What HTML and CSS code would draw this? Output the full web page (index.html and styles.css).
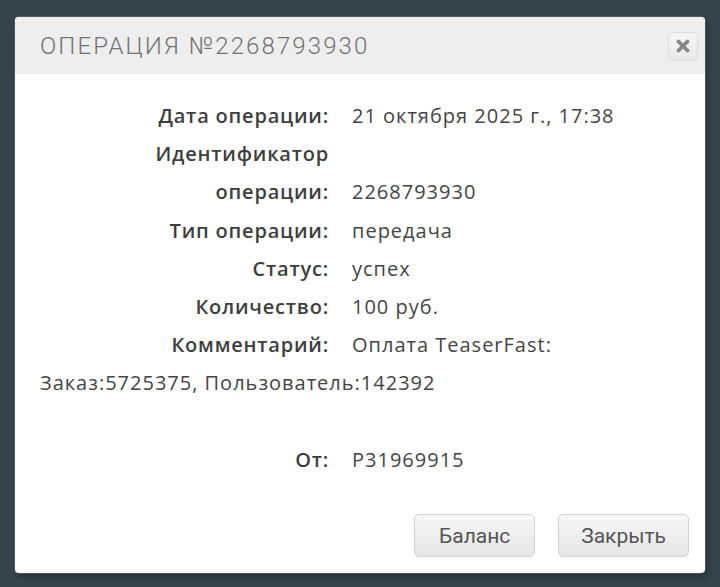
FILE: index.html
```html
<!DOCTYPE html>
<html lang="ru">
<head>
<meta charset="utf-8">
<title>Операция №2268793930</title>
<link rel="stylesheet" href="styles.css">
</head>
<body>
<div class="modal">
  <div class="modal-header">
    <h3 class="title">ОПЕРАЦИЯ №2268793930</h3>
    <button class="close" type="button" aria-label="Закрыть">
      <svg width="14" height="14" viewBox="0 0 14 14"><path d="M2.5 2.5 L11.5 11.5 M11.5 2.5 L2.5 11.5" stroke="#868686" stroke-width="3.8" stroke-linecap="round"/></svg>
    </button>
  </div>
  <div class="modal-body">
    <div class="row"><span class="label">Дата операции:</span><span class="value">21 октября 2025 г., 17:38</span></div>
    <div class="row"><span class="label">Идентификатор<br>операции:</span><span class="value">2268793930</span></div>
    <div class="row"><span class="label">Тип операции:</span><span class="value">передача</span></div>
    <div class="row"><span class="label">Статус:</span><span class="value">успех</span></div>
    <div class="row"><span class="label">Количество:</span><span class="value">100 руб.</span></div>
    <div class="row"><span class="label">Комментарий:</span><span class="value">Оплата TeaserFast:<br>Заказ:5725375, Пользователь:142392</span></div>
    <div class="row spacer"></div>
    <div class="row"><span class="label">От:</span><span class="value">P31969915</span></div>
  </div>
  <div class="modal-footer">
    <button class="btn" type="button">Баланс</button>
    <button class="btn" type="button">Закрыть</button>
  </div>
</div>
</body>
</html>
```
FILE: styles.css
```css
html, body {
  margin: 0;
  padding: 0;
  background: #37444c;
  height: 100%;
}
body {
  padding: 17px 15px 0;
  box-sizing: border-box;
}
.modal {
  width: 690px;
  background: #fff;
  border-radius: 4px;
  overflow: hidden;
  box-shadow: 0 0 0 1px rgba(255,255,255,0.15), 2px 3px 6px rgba(0,0,0,0.35);
}
.modal-header {
  height: 57px;
  background: #eeeeee;
  display: flex;
  align-items: center;
  justify-content: space-between;
  padding: 0 7px 0 25px;
}
.title {
  margin: 0;
  font-family: Roboto, "Liberation Sans", sans-serif;
  font-weight: 300;
  font-size: 24px;
  letter-spacing: 2.1px;
  color: #727272;
  line-height: 1;
}
.close {
  width: 30px;
  height: 29px;
  margin-top: 1px;
  border: 1px solid #dcdcdc;
  border-radius: 5px;
  background: linear-gradient(#f6f6f6, #e9e9e9);
  display: flex;
  align-items: center;
  justify-content: center;
  padding: 0;
}
.modal-body {
  padding: 23px 25px 0;
  font-family: "Open Sans", "Liberation Sans", sans-serif;
  font-size: 20px;
  line-height: 38.2px;
  color: #3d3d3d;
}
.row {
  display: block;
}
.spacer {
  height: 38.2px;
}
.label {
  display: inline-block;
  width: 289px;
  margin-right: 23px;
  text-align: right;
  font-weight: 600;
  letter-spacing: 0.8px;
  color: #3e3e3e;
  vertical-align: baseline;
}
.value {
  font-weight: 400;
  letter-spacing: 1px;
  color: #444;
}
.modal-footer {
  display: flex;
  justify-content: flex-end;
  gap: 23px;
  padding: 35px 16px 16px;
}
.btn {
  height: 43px;
  min-width: 121px;
  padding: 0 22px;
  font-family: Roboto, "Liberation Sans", sans-serif;
  font-size: 21px;
  color: #555;
  background: linear-gradient(#f7f7f7, #e6e6e6);
  border: 1px solid #d2d2d2;
  border-radius: 5px;
}
```
